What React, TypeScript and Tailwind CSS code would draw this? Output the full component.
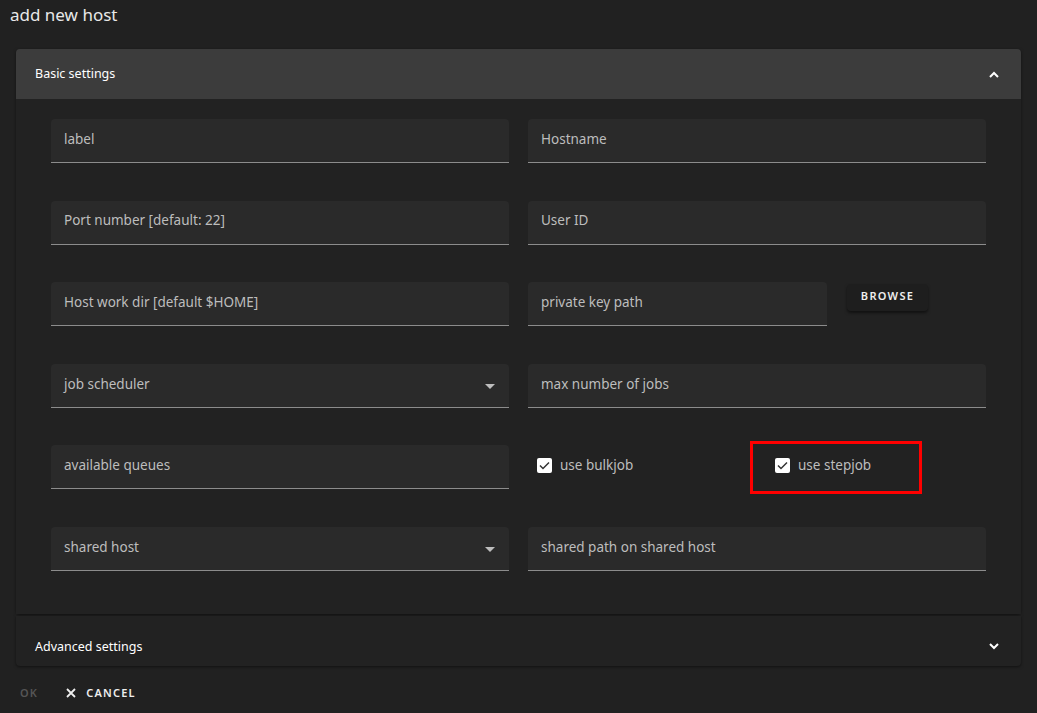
import React from "react";

const font = { fontFamily: '"Noto Sans", "Liberation Sans", sans-serif' };

function Field({ label, select, className = "w-[458px]" }: { label: string; select?: boolean; className?: string }) {
  return (
    <div className={`${className} h-[44px] bg-[#2a2a2a] rounded-t-[4px] border-b border-[#8c8c8c] flex items-center justify-between pl-[13px] pr-[14px]`}>
      <span className="text-[13.5px] text-[#bdbdbd] -mt-[3px]">{label}</span>
      {select && (
        <svg width="10" height="5" viewBox="0 0 10 5" className="mt-[2px]">
          <path d="M0 0 L10 0 L5 5 Z" fill="#bdbdbd" />
        </svg>
      )}
    </div>
  );
}

function Check({ label }: { label: string }) {
  return (
    <div className="flex items-center gap-[8px]">
      <div className="w-[15px] h-[15px] rounded-[2px] bg-white flex items-center justify-center">
        <svg width="11" height="9" viewBox="0 0 11 9">
          <path d="M1 4.5 L4 7.5 L10 1.5" stroke="#333" strokeWidth="1.5" fill="none" />
        </svg>
      </div>
      <span className="text-[13.5px] text-[#bdbdbd] -mt-[1px]">{label}</span>
    </div>
  );
}

function Chevron({ up }: { up?: boolean }) {
  return (
    <svg width="10" height="7" viewBox="0 0 10 7">
      <path d={up ? "M1 6 L5 2 L9 6" : "M1 1 L5 5 L9 1"} stroke="white" strokeWidth="2" fill="none" />
    </svg>
  );
}

export default function App() {
  return (
    <div className="w-[1037px] h-[713px] bg-[#212121] overflow-hidden" style={font}>
      <div className="h-[49px] pl-[10px] pt-[2px] text-[17px] text-[#e8e8e8]">add new host</div>

      <div className="mx-[16px] shadow-[0_1px_3px_rgba(0,0,0,0.5)] rounded-[4px]">
        <div className="h-[50px] bg-[#3c3c3c] rounded-t-[4px] flex items-center justify-between pl-[19px] pr-[22px]">
          <span className="text-[12.5px] text-white">Basic settings</span>
          <Chevron up />
        </div>
        <div className="bg-[#222222] pt-[20px] pb-[43px] px-[35px] flex flex-col gap-[37.6px]">
          <div className="flex gap-[19px]">
            <Field label="label" />
            <Field label="Hostname" />
          </div>
          <div className="flex gap-[19px]">
            <Field label="Port number [default: 22]" />
            <Field label="User ID" />
          </div>
          <div className="flex gap-[19px]">
            <Field label="Host work dir [default $HOME]" />
            <div className="flex items-start gap-[20px]">
              <Field label="private key path" className="w-[299px]" />
              <button className="mt-[2px] h-[27px] w-[81px] rounded-[4px] bg-[#1e1e1e] shadow-[0_2px_3px_rgba(0,0,0,0.5)] text-[11px] font-semibold tracking-[1.3px] text-[#eeeeee] pb-[3px]">
                BROWSE
              </button>
            </div>
          </div>
          <div className="flex gap-[19px]">
            <Field label="job scheduler" select />
            <Field label="max number of jobs" />
          </div>
          <div className="flex gap-[19px]">
            <Field label="available queues" />
            <div className="w-[458px] h-[44px] flex items-center pl-[9px] -mt-[2px]">
              <div className="w-[238px]">
                <Check label="use bulkjob" />
              </div>
              <div className="relative">
                <Check label="use stepjob" />
                <div className="absolute left-[-25px] top-[-15px] w-[172px] h-[53px] border-[3px] border-[#ff0000]" />
              </div>
            </div>
          </div>
          <div className="flex gap-[19px]">
            <Field label="shared host" select />
            <Field label="shared path on shared host" />
          </div>
        </div>
      </div>

      <div className="mx-[16px] mt-[2px] h-[50px] pt-[12px] bg-[#222222] shadow-[0_1px_3px_rgba(0,0,0,0.5)] rounded-b-[4px] flex items-center justify-between pl-[19px] pr-[22px]">
        <span className="text-[12.5px] text-white">Advanced settings</span>
        <Chevron />
      </div>

      <div className="flex items-center h-[55px] pl-[20px] text-[11px] font-semibold tracking-[1.2px]">
        <span className="text-[#555555]">OK</span>
        <span className="ml-[28px] flex items-center gap-[10px] text-[#eeeeee]">
          <svg width="10" height="10" viewBox="0 0 10 10">
            <path d="M1 1 L9 9 M9 1 L1 9" stroke="#eeeeee" strokeWidth="1.8" />
          </svg>
          CANCEL
        </span>
      </div>
    </div>
  );
}
